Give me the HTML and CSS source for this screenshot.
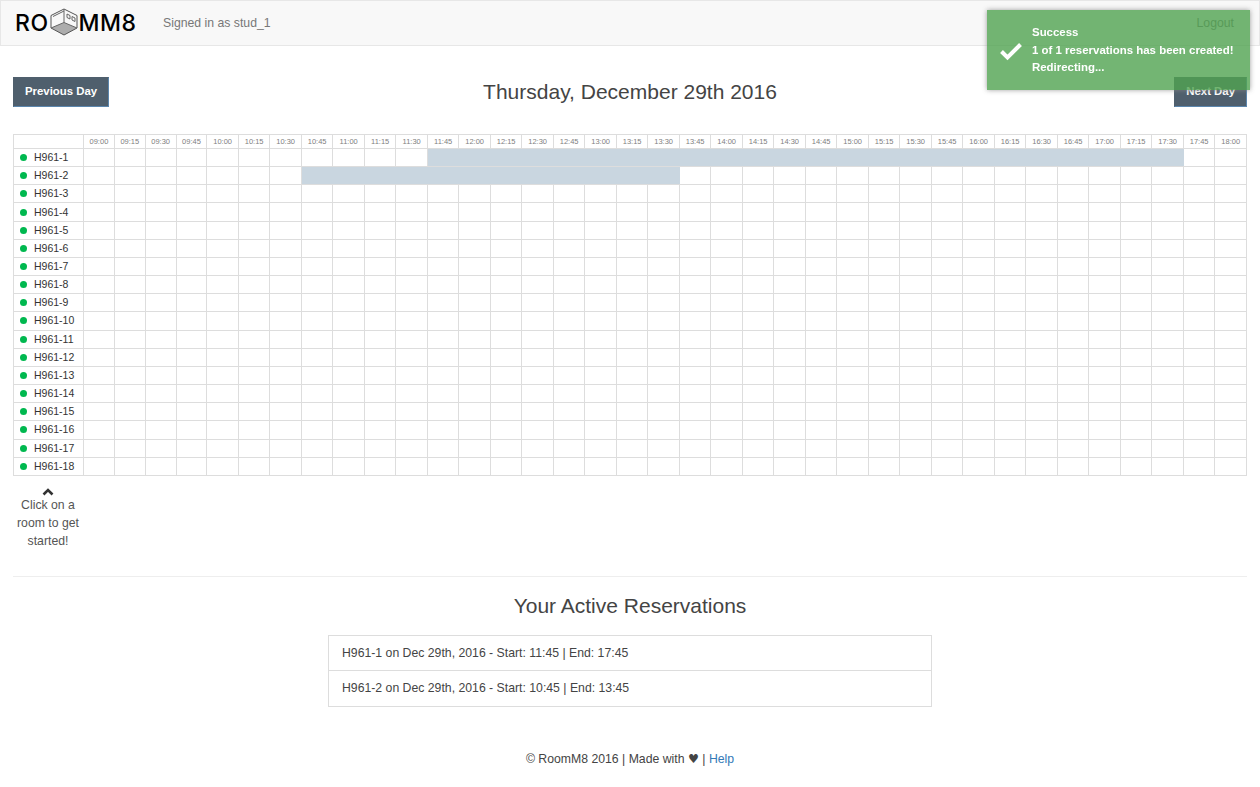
FILE: index.html
```html
<!DOCTYPE html>
<html lang="en">
<head>
<meta charset="UTF-8">
<meta name="viewport" content="width=device-width, initial-scale=1.0">
<title>RoomM8</title>
<link rel="stylesheet" href="styles.css">
</head>
<body>

<div class="navbar">
    <div class="brand">
        <span>RO</span>
        <svg class="brand-cube" width="30" height="28" viewBox="0 0 30 28">
            <path d="M15 14.5 L28 20 L15 27 L2 20 Z" fill="#adadad"/>
            <path d="M15 1 L28 7.5 L28 20 L15 27 L2 20 L2 7.5 Z" fill="none" stroke="#555" stroke-width="1" stroke-linejoin="round"/>
            <path d="M2 20 L15 14.5 L28 20 M15 14.5 L15 1 M4 8.5 L15 3" fill="none" stroke="#666" stroke-width="1"/>
            <path d="M18 6 L21 7.5 L21 11 L18 9.5 Z M23 8.5 L26 10 L26 13.5 L23 12 Z" fill="none" stroke="#666" stroke-width="1"/>
        </svg>
        <span>MM8</span>
    </div>
    <span class="signed-in">Signed in as stud_1</span>
    <a class="logout" href="#">Logout</a>
</div>

<div class="day-bar">
    <a class="day-btn" href="#">Previous Day</a>
    <h1 class="day-title">Thursday, December 29th 2016</h1>
    <a class="day-btn day-btn-next" href="#">Next Day</a>
</div>

<table class="schedule" id="schedule"></table>

<div class="hint">
    <svg class="hint-arrow" width="12" height="8" viewBox="0 0 12 8">
        <path d="M1.5 6.5 L6 2 L10.5 6.5" fill="none" stroke="#333" stroke-width="2.6"/>
    </svg>
    <div>Click on a room to get started!</div>
</div>

<hr class="divider">

<h2 class="active-title">Your Active Reservations</h2>
<ul class="reservations">
    <li>H961-1 on Dec 29th, 2016 - Start: 11:45 | End: 17:45</li>
    <li>H961-2 on Dec 29th, 2016 - Start: 10:45 | End: 13:45</li>
</ul>

<div class="footer">© RoomM8 2016 | Made with <span class="heart">♥</span> | <a href="#">Help</a></div>

<!-- Success toast -->
<div class="toast">
    <svg class="toast-check" width="24" height="20" viewBox="0 0 24 20">
        <path d="M2.5 10.5 L8.5 16.5 L21.5 3.5" fill="none" stroke="#fff" stroke-width="4"/>
    </svg>
    <div class="toast-text">
        <div>Success</div>
        <div>1 of 1 reservations has been created!</div>
        <div>Redirecting...</div>
    </div>
</div>

<script src="script.js"></script>
</body>
</html>
```

FILE: styles.css
```css
body {
    font-family: "Liberation Sans", Arial, sans-serif;
    font-size: 12.25px;
    color: #444;
    margin: 0;
    padding: 0;
}
a {
    text-decoration: none;
}
.navbar {
    display: flex;
    align-items: center;
    height: 44px;
    padding-left: 14px;
    background-color: #f8f8f8;
    border: 1px solid #e7e7e7;
}
.brand {
    display: flex;
    align-items: center;
    font-family: Inter, sans-serif;
    font-size: 23px;
    font-weight: 500;
    letter-spacing: 0.5px;
    color: #000;
    width: 148px;
}
.brand-cube {
    flex: none;
    margin-top: -3px;
}
.signed-in {
    color: #777;
}
.logout {
    margin-left: auto;
    margin-right: 25px;
    color: #777;
}
.day-bar {
    display: grid;
    grid-template-columns: 1fr auto 1fr;
    align-items: center;
    margin: 31px 13px 27px;
}
.day-btn {
    justify-self: start;
    padding: 6px 11px 8px;
    font-size: 11.4px;
    line-height: 14px;
    font-weight: bold;
    color: #fff;
    background-color: #4f5f6d;
    border: 1px solid #4f5f6d;
    border-bottom-color: #5b86ad;
    border-right-color: #5b86ad;
}
.day-btn-next {
    justify-self: end;
}
.day-title {
    margin: 0;
    font-size: 21px;
    font-weight: normal;
}
.schedule {
    table-layout: fixed;
    border-collapse: collapse;
    width: 1234px;
    margin-left: 13px;
}
.schedule th,
.schedule td {
    padding: 0;
    border: 1px solid #ddd;
    overflow: hidden;
    white-space: nowrap;
}
.schedule th {
    height: 13px;
    font-size: 7.5px;
    font-weight: normal;
    color: #808080;
    text-align: center;
}
.schedule th:first-child {
    width: 69px;
}
.schedule th:nth-child(n+2):nth-child(-n+5) {
    width: 29.85px;
}
.schedule td {
    height: 17.17px;
    font-size: 10.5px;
}
.schedule .room {
    height: 16.17px;
    padding: 0 0 1px 6px;
    color: #333;
}
.room-dot {
    display: inline-block;
    width: 7px;
    height: 7px;
    margin-right: 7px;
    border-radius: 50%;
    background-color: #00b84f;
}
.schedule .taken {
    background-color: #c9d6e0;
    border-left-color: #c9d6e0;
    border-right-color: #c9d6e0;
}
.hint {
    width: 70px;
    margin: 12px 0 0 13px;
    line-height: 18px;
    text-align: center;
    color: #555;
}
.hint-arrow {
    display: block;
    margin: 0 auto;
}
.divider {
    height: 0;
    margin: 26px 13px 0;
    border: 0;
    border-top: 1px solid #eee;
}
.active-title {
    margin: 18px 0 18px;
    font-size: 21px;
    line-height: 22px;
    font-weight: normal;
    text-align: center;
}
.reservations {
    width: 604px;
    margin: 0 auto;
    padding: 0;
    list-style: none;
}
.reservations li {
    padding: 9px 13px;
    line-height: 16.6px;
    border: 1px solid #ddd;
}
.reservations li + li {
    border-top: 0;
}
.footer {
    margin-top: 44px;
    line-height: 17px;
    text-align: center;
}
.footer a {
    color: #337ab7;
}
.heart {
    font-family: "DejaVu Sans", sans-serif;
}
.toast {
    position: fixed;
    top: 10px;
    right: 10px;
    display: flex;
    align-items: center;
    width: 263px;
    height: 80px;
    padding: 1px 0 0 12px;
    box-sizing: border-box;
    font-size: 11.45px;
    font-weight: bold;
    line-height: 17.5px;
    color: #fff;
    background-color: #51a351;
    opacity: 0.8;
    box-shadow: 0 0 5px #888;
}
.toast-check {
    flex: none;
    margin-right: 9px;
}
```

FILE: script.js
```js
// Builds the room/time grid
const table = document.getElementById('schedule');
const takenSlots = {
    1: [11.75, 17.75],
    2: [10.75, 13.75]
};

let head = '<tr><th></th>';
for (let t = 9; t <= 18; t += 0.25) {
    const mins = String((t % 1) * 60).padStart(2, '0');
    const hours = String(Math.floor(t)).padStart(2, '0');
    head += `<th>${hours}:${mins}</th>`;
}
head += '</tr>';

let rows = '';
for (let r = 1; r <= 18; r++) {
    rows += `<tr><td class="room"><span class="room-dot"></span>H961-${r}</td>`;
    for (let t = 9; t <= 18; t += 0.25) {
        const slot = takenSlots[r];
        const taken = slot && t >= slot[0] && t < slot[1];
        rows += taken ? '<td class="taken"></td>' : '<td></td>';
    }
    rows += '</tr>';
}

table.innerHTML = head + rows;
```
